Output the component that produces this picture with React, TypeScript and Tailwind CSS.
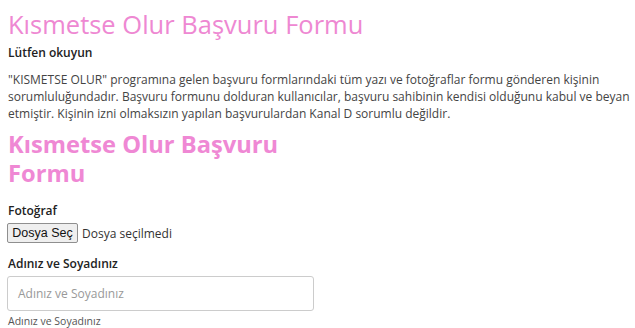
import React from "react";

export default function App() {
  return (
    <div className="w-[635px] h-[328px] overflow-hidden bg-white px-2 font-['Open_Sans',sans-serif] text-[#333333]">
      <h1 className="pt-[8px] text-[25.5px] leading-[32px] font-normal text-[#ee88d2]">
        Kısmetse Olur Başvuru Formu
      </h1>
      <p className="mt-[4px] text-[12px] leading-[17px] font-semibold text-[#222222]">Lütfen okuyun</p>
      <p className="mt-[10px] w-[625px] text-[12px] leading-[17px] text-[#444444]">
        "KISMETSE OLUR" programına gelen başvuru formlarındaki tüm yazı ve fotoğraflar formu gönderen kişinin
        sorumluluğundadır. Başvuru formunu dolduran kullanıcılar, başvuru sahibinin kendisi olduğunu kabul ve beyan
        etmiştir. Kişinin izni olmaksızın yapılan başvurulardan Kanal D sorumlu değildir.
      </p>
      <h2 className="mt-[8px] max-w-[290px] text-[23.7px] leading-[29px] font-bold text-[#ef88d4]">
        Kısmetse Olur Başvuru Formu
      </h2>
      <p className="mt-[14px] text-[12px] leading-[17px] font-semibold text-[#222222]">Fotoğraf</p>
      <div className="mt-[4px] flex items-center">
        <button className="h-[20px] w-[71px] -ml-px rounded-[2px] border border-[#8f8f8f] bg-[#efefef] text-[12.5px] leading-[18px] text-[#111111] font-['Liberation_Sans',sans-serif]">
          Dosya Seç
        </button>
        <span className="ml-[4px] text-[12px] leading-[17px] text-[#333333]">Dosya seçilmedi</span>
      </div>
      <p className="mt-[12px] text-[12px] leading-[17px] font-semibold text-[#222222]">Adınız ve Soyadınız</p>
      <div className="mt-[4px] -ml-px flex h-[35px] w-[307px] items-center rounded-[3px] border border-[#cccccc] px-[10px]">
        <span className="text-[12px] leading-[17px] text-[#999999]">Adınız ve Soyadınız</span>
      </div>
      <p className="mt-[3px] text-[10.5px] leading-[14px] text-[#555555]">Adınız ve Soyadınız</p>
    </div>
  );
}
